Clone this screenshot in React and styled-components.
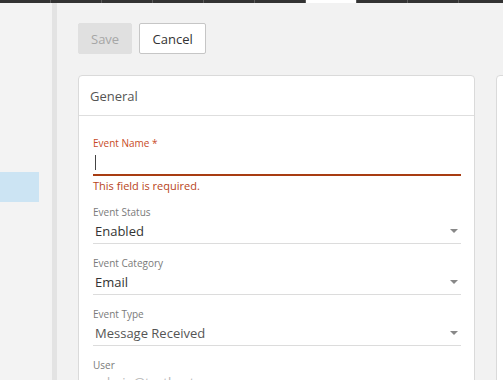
import React from "react";
import styled, { createGlobalStyle } from "styled-components";

const GlobalStyle = createGlobalStyle`
  html, body {
    margin: 0;
    padding: 0;
    background: #f2f2f2;
    font-family: "Open Sans", "Liberation Sans", sans-serif;
    overflow: hidden;
  }
`;

const tabs = [0, 1, 2, 3, 4, 5, 6, 7, 8, 9];

const fields = [
  { label: "Event Status", value: "Enabled" },
  { label: "Event Category", value: "Email" },
  { label: "Event Type", value: "Message Received", muted: true },
];

const App = () => {
  return (
    <Page>
      <GlobalStyle />
      <TopStrip>
        {tabs.map((t) => (
          <StripTab key={t} active={t === 6} />
        ))}
      </TopStrip>
      <Body>
        <Sidebar>
          <SideItem />
        </Sidebar>
        <Main>
          <Toolbar>
            <Button disabled>Save</Button>
            <Button>Cancel</Button>
          </Toolbar>
          <Cards>
            <Card>
              <CardHeader>General</CardHeader>
              <CardBody>
                <Field>
                  <Label error>Event Name *</Label>
                  <InputLine error>
                    <Caret />
                  </InputLine>
                  <ErrorText>This field is required.</ErrorText>
                </Field>
                {fields.map((f) => (
                  <Field key={f.label}>
                    <Label>{f.label}</Label>
                    <InputLine>
                      <Value muted={f.muted}>{f.value}</Value>
                      <Arrow />
                    </InputLine>
                  </Field>
                ))}
                <Field>
                  <Label>User</Label>
                  <InputLine readOnly>
                    <Value disabled>admin@testhostyn.com</Value>
                  </InputLine>
                </Field>
              </CardBody>
            </Card>
            <Card />
          </Cards>
        </Main>
      </Body>
    </Page>
  );
};

const Page = styled.div`
  width: 503px;
  height: 380px;
  display: flex;
  flex-direction: column;
  overflow: hidden;
`;

const TopStrip = styled.div`
  display: flex;
  height: 3px;
  gap: 1px;
  background: #5a5a5a;
  flex-shrink: 0;
`;

const StripTab = styled.div`
  width: 50px;
  flex-shrink: 0;
  background: ${({ active }) => (active ? "#ffffff" : "#333333")};
`;

const Body = styled.div`
  flex: 1;
  display: flex;
  min-height: 0;
`;

const Sidebar = styled.div`
  width: 52px;
  flex-shrink: 0;
  background: #f3f3f3;
  border-right: 5px solid #e3e3e3;
  padding-top: 169px;
`;

const SideItem = styled.div`
  width: 39px;
  height: 30px;
  background: #cce4f3;
`;

const Main = styled.div`
  flex: 1;
  padding: 20px 0 0 21px;
  display: flex;
  flex-direction: column;
  gap: 21px;
  min-width: 0;
`;

const Toolbar = styled.div`
  display: flex;
  gap: 7px;
`;

const Button = styled.button`
  height: 31px;
  padding: 0 12px;
  font-family: inherit;
  font-size: 13px;
  border-radius: 2px;
  border: 1px solid ${({ disabled }) => (disabled ? "#e0e0e0" : "#c6c6c6")};
  background: ${({ disabled }) => (disabled ? "#e0e0e0" : "#ffffff")};
  color: ${({ disabled }) => (disabled ? "#a6a6a6" : "#333333")};
  min-width: ${({ disabled }) => (disabled ? "54px" : "67px")};
`;

const Cards = styled.div`
  display: flex;
  gap: 21px;
`;

const Card = styled.div`
  width: 395px;
  flex-shrink: 0;
  height: 320px;
  background: #ffffff;
  border: 1px solid #dadada;
  border-radius: 4px;
`;

const CardHeader = styled.div`
  height: 39px;
  display: flex;
  align-items: center;
  padding-left: 11px;
  font-size: 13px;
  color: #555555;
  border-bottom: 1px solid #dedede;
`;

const CardBody = styled.div`
  padding: 20px 13px 0 14px;
  display: flex;
  flex-direction: column;
  gap: 11px;
`;

const Field = styled.div`
  display: flex;
  flex-direction: column;
`;

const Label = styled.div`
  font-size: 10px;
  line-height: 14px;
  color: ${({ error }) => (error ? "#c84b1f" : "#7a7a7a")};
`;

const InputLine = styled.div`
  height: ${({ readOnly }) => (readOnly ? "19px" : "24px")};
  display: flex;
  align-items: center;
  justify-content: space-between;
  padding: 0 3px 0 2px;
  border-bottom: ${({ error }) => (error ? "2px solid #a83c12" : "1px solid #dcdcdc")};
  margin-bottom: ${({ error }) => (error ? "0" : "1px")};
`;

const Caret = styled.div`
  width: 1px;
  height: 15px;
  background: #444444;
`;

const Value = styled.div`
  font-size: 13px;
  color: ${({ muted, disabled }) => (disabled ? "#b5b5b5" : muted ? "#555555" : "#333333")};
  white-space: nowrap;
`;

const Arrow = styled.div`
  width: 0;
  height: 0;
  border-left: 4px solid transparent;
  border-right: 4px solid transparent;
  border-top: 4px solid #888888;
`;

const ErrorText = styled.div`
  font-size: 11px;
  line-height: 16px;
  padding-top: 2px;
  color: #b8441a;
`;

export default App;
